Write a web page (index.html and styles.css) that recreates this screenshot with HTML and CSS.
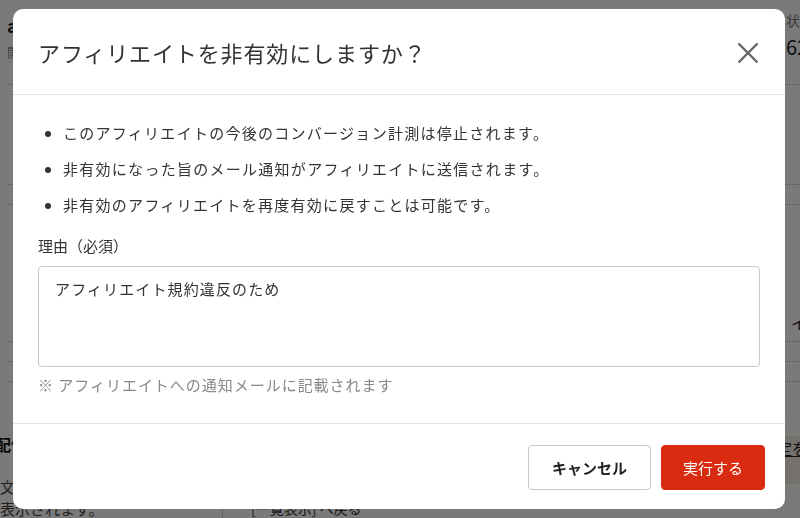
FILE: index.html
```html
<!DOCTYPE html>
<html lang="ja">
  <head>
    <meta charset="UTF-8" />
    <meta name="viewport" content="width=device-width, initial-scale=1.0" />
    <title>アフィリエイト管理</title>
    <link rel="stylesheet" href="styles.css">
  </head>
  <body>
    <!-- page behind the dialog -->
    <div class="page">
      <div class="summary">
        <div class="summary-main">
          <div class="site-name">affiliate-site</div>
          <div class="site-date">開始日 2023/04/01</div>
        </div>
        <div class="summary-stat">
          <div class="stat-label">状況</div>
          <div class="stat-value">62</div>
        </div>
      </div>
      <div class="row row-tall"></div>
      <div class="row row-thin"></div>
      <div class="row row-block"><span class="row-end">イ</span></div>
      <div class="row row-thin"></div>
      <div class="row row-thin"></div>
      <div class="lower">
        <div class="lower-side">
          <div class="lower-title">配信設定</div>
          <div class="lower-text">文言を設定すると<br>表示されます。</div>
        </div>
        <div class="lower-main">
          <div class="lower-link"><span>設定を変更</span></div>
          <div class="lower-foot">[一覧表示] へ戻る</div>
        </div>
      </div>
    </div>

    <div class="overlay">
      <div class="modal">
        <div class="modal-header">
          <h2>アフィリエイトを非有効にしますか？</h2>
          <button class="close-button" aria-label="閉じる">
            <svg width="22" height="22" viewBox="0 0 22 22">
              <path d="M1.5 1.5 L20.5 20.5 M20.5 1.5 L1.5 20.5" stroke="#666" stroke-width="2.4" fill="none" />
            </svg>
          </button>
        </div>

        <div class="modal-body">
          <ul class="notes">
            <li>このアフィリエイトの今後のコンバージョン計測は停止されます。</li>
            <li>非有効になった旨のメール通知がアフィリエイトに送信されます。</li>
            <li>非有効のアフィリエイトを再度有効に戻すことは可能です。</li>
          </ul>
          <label class="field-label" for="reason">理由（必須）</label>
          <textarea id="reason">アフィリエイト規約違反のため</textarea>
          <p class="hint">※ アフィリエイトへの通知メールに記載されます</p>
        </div>

        <div class="modal-footer">
          <button class="btn btn-cancel">キャンセル</button>
          <button class="btn btn-danger">実行する</button>
        </div>
      </div>
    </div>
  </body>
</html>
```

FILE: styles.css
```css
body {
  margin: 0;
  font-family: "Noto Sans CJK JP", "Noto Sans", sans-serif;
  color: #333;
  background-color: #fff;
  height: 100vh;
  overflow: hidden;
}

/* background page */
.page {
  padding-left: 7px;
}

.summary {
  height: 85px;
  display: flex;
  justify-content: space-between;
  border-bottom: 1px solid #d8d8d8;
  box-sizing: border-box;
  margin-right: -40px;
}

.summary-main {
  padding-top: 12px;
}

.site-name {
  font-size: 18px;
  font-weight: bold;
  color: #222;
}

.site-date {
  font-size: 13px;
  color: #888;
  margin-top: 4px;
}

.summary-stat {
  width: 54px;
  padding-top: 10px;
}

.stat-label {
  font-size: 14px;
  color: #777;
}

.stat-value {
  font-size: 20px;
  color: #222;
  margin-top: 2px;
}

.row {
  border-bottom: 1px solid #d8d8d8;
  box-sizing: border-box;
}

.row-tall {
  height: 100px;
}

.row-thin {
  height: 20px;
}

.row-block {
  height: 137px;
  display: flex;
  justify-content: flex-end;
  align-items: flex-end;
  padding-bottom: 8px;
}

.row-end {
  font-size: 15px;
  color: #222;
  margin-right: -6px;
}

.lower {
  display: grid;
  grid-template-columns: 215px 1fr;
}

.lower-side {
  padding-top: 50px;
}

.lower-title {
  font-size: 16px;
  font-weight: bold;
  color: #111;
  margin-left: -12px;
}

.lower-text {
  font-size: 15px;
  color: #444;
  margin-top: 20px;
  margin-left: -7px;
  line-height: 22px;
}

.lower-main {
  border-left: 1px solid #d8d8d8;
}

.lower-link {
  height: 48px;
  background-color: #f3ede4;
  text-align: right;
  padding-top: 54px;
  background-clip: content-box;
  margin-right: -40px;
  font-size: 16px;
}

.lower-link span {
  text-decoration: underline;
  color: #222;
}

.lower-foot {
  font-size: 14px;
  padding: 14px 0 0 28px;
  color: #333;
}

/* dialog */
.overlay {
  position: fixed;
  inset: 0;
  background-color: rgba(0, 0, 0, 0.52);
  display: flex;
  justify-content: center;
  align-items: center;
}

.modal {
  width: 772px;
  background-color: #fff;
  border-radius: 10px;
  margin-left: -2px;
}

.modal-header {
  height: 85px;
  display: flex;
  align-items: center;
  justify-content: space-between;
  padding: 0 26px 0 25px;
  border-bottom: 1px solid #e3e3e3;
}

.modal-header h2 {
  margin: 0;
  font-size: 22px;
  font-weight: normal;
  letter-spacing: 0.04em;
  color: #333;
}

.close-button {
  background: none;
  border: none;
  padding: 0;
  margin-top: 2px;
  cursor: pointer;
  display: flex;
}

.modal-body {
  padding: 26px 25px 26px;
}

.notes {
  margin: 0 0 17px;
  padding-left: 25px;
  font-size: 15px;
  line-height: 24px;
  letter-spacing: 0.085em;
  color: #333;
}

.notes li {
  margin-bottom: 12px;
}

.notes li:last-child {
  margin-bottom: 0;
}

.field-label {
  display: block;
  font-size: 15px;
  line-height: 24px;
  color: #333;
  margin-bottom: 8px;
}

textarea {
  display: block;
  width: 100%;
  height: 101px;
  box-sizing: border-box;
  border: 1px solid #c8c8c8;
  border-radius: 4px;
  padding: 10px 16px;
  font-family: inherit;
  font-size: 15px;
  line-height: 24px;
  letter-spacing: 0.075em;
  color: #333;
  resize: none;
}

.hint {
  margin: 6px 0 0;
  font-size: 15px;
  line-height: 24px;
  letter-spacing: 0.065em;
  color: #888;
}

.modal-footer {
  display: flex;
  justify-content: flex-end;
  gap: 10px;
  padding: 21px 20px 19px;
  border-top: 1px solid #e3e3e3;
}

.btn {
  height: 45px;
  padding: 0 21px;
  border-radius: 4px;
  font-family: inherit;
  font-size: 15px;
  cursor: pointer;
}

.btn-cancel {
  background-color: #fff;
  border: 1px solid #c8c8c8;
  color: #222;
  font-weight: bold;
  width: 123px;
}

.btn-danger {
  background-color: #d92b0f;
  border: 1px solid #d92b0f;
  color: #fff;
  width: 104px;
}
```
